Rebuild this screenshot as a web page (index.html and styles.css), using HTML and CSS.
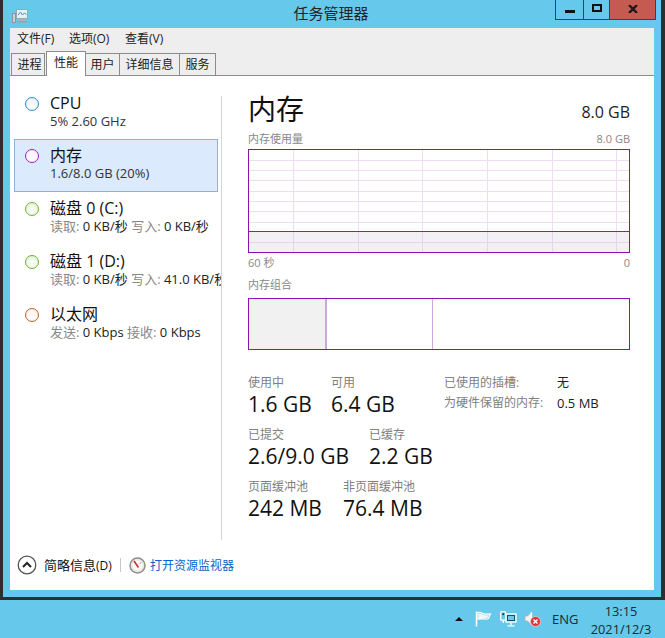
FILE: index.html
```html
<!DOCTYPE html>
<html lang="zh-CN">
<head>
<meta charset="utf-8">
<title>任务管理器</title>
<link rel="stylesheet" href="styles.css">
</head>
<body>
<div class="screen">
  <div class="window">
    <header class="titlebar">
      <div class="app-icon">
        <svg width="16" height="15" viewBox="0 0 16 15">
          <rect x="4.5" y="0.5" width="11" height="9" fill="#e4f3f9" stroke="#9aa8ae"/>
          <path d="M6 6l2.500-3 2 3 2-2 2 1.500" fill="none" stroke="#4a8fc4"/>
          <rect x="0.500" y="4.500" width="3" height="9" fill="#c9d2d6" stroke="#8a969b"/>
          <rect x="7" y="10" width="6" height="2" fill="#a9b4b9"/>
          <rect x="5" y="12" width="10" height="1.500" fill="#97a4a9"/>
        </svg>
      </div>
      <div class="title">任务管理器</div>
      <div class="controls">
        <div class="ctl ctl-min"><span class="min-glyph"></span></div>
        <div class="ctl ctl-max"><span class="max-glyph"></span></div>
        <div class="ctl ctl-close">
          <svg width="10" height="8" viewBox="0 0 10 8"><path d="M1 0l8 8M9 0l-8 8" fill="none" stroke="#1a1a1a" stroke-width="2.400"/></svg>
        </div>
      </div>
    </header>
    <div class="client">
      <nav class="menubar">
        <span class="menu">文件(F)</span>
        <span class="menu">选项(O)</span>
        <span class="menu">查看(V)</span>
      </nav>
      <div class="tabs">
        <span class="tab tab-1">进程</span>
        <span class="tab tab-active">性能</span>
        <span class="tab tab-3">用户</span>
        <span class="tab tab-4">详细信息</span>
        <span class="tab tab-5">服务</span>
      </div>
      <main class="panel">
        <aside class="sidebar">
          <div class="item item-first">
            <span class="dot dot-blue"></span>
            <div class="item-text"><div class="item-name">CPU</div><div class="item-sub dark">5% 2.60 GHz</div></div>
          </div>
          <div class="item item-selected">
            <span class="dot dot-purple"></span>
            <div class="item-text"><div class="item-name">内存</div><div class="item-sub dark">1.6/8.0 GB (20%)</div></div>
          </div>
          <div class="item">
            <span class="dot dot-green"></span>
            <div class="item-text"><div class="item-name">磁盘 0 (C:)</div><div class="item-sub"><i>读取:</i> 0 KB/秒 <i>写入:</i> 0 KB/秒</div></div>
          </div>
          <div class="item">
            <span class="dot dot-green"></span>
            <div class="item-text"><div class="item-name">磁盘 1 (D:)</div><div class="item-sub"><i>读取:</i> 0 KB/秒 <i>写入:</i> 41.0 KB/秒</div></div>
          </div>
          <div class="item">
            <span class="dot dot-orange"></span>
            <div class="item-text"><div class="item-name">以太网</div><div class="item-sub"><i>发送:</i> 0 Kbps <i>接收:</i> 0 Kbps</div></div>
          </div>
        </aside>
        <div class="divider"></div>
        <section class="detail">
          <div class="head-row">
            <h1 class="head">内存</h1>
            <span class="head-total">8.0 GB</span>
          </div>
          <div class="label-row label-usage">
            <span>内存使用量</span><span>8.0 GB</span>
          </div>
          <svg class="graph" width="382" height="104" viewBox="0 0 382 104" shape-rendering="crispEdges">
            <rect x="0" y="82" width="382" height="22" fill="#f3f0f5"/>
            <g stroke="#efdcf5" fill="none">
              <path d="M0 11.500H382M0 21.500H382M0 31.500H382M0 42.500H382M0 52.500H382M0 62.500H382M0 73.500H382"/>
              <path d="M45.500 0V82M110.500 0V82M174.500 0V82M239.500 0V82M304.500 0V82M368.500 0V82"/>
            </g>
            <g stroke="#e6d5ea" fill="none">
              <path d="M0 93.500H382"/>
              <path d="M45.500 82V104M110.500 82V104M174.500 82V104M239.500 82V104M304.500 82V104M368.500 82V104"/>
            </g>
            <path d="M0 82.500H382" stroke="#7b2a96"/>
            <rect x="0.500" y="0.500" width="381" height="103" fill="none" stroke="#8b12ae"/>
          </svg>
          <div class="label-row label-axis">
            <span>60 秒</span><span>0</span>
          </div>
          <div class="label-row label-combo"><span>内存组合</span></div>
          <div class="combo">
            <div class="seg seg-used"></div>
            <div class="seg seg-mod"></div>
            <div class="seg seg-free"></div>
          </div>
          <div class="stats">
            <div class="stats-main">
              <div class="stat-row">
                <div class="stat stat-a"><div class="stat-label">使用中</div><div class="stat-value">1.6 GB</div></div>
                <div class="stat"><div class="stat-label">可用</div><div class="stat-value">6.4 GB</div></div>
              </div>
              <div class="stat-row">
                <div class="stat stat-b"><div class="stat-label">已提交</div><div class="stat-value">2.6/9.0 GB</div></div>
                <div class="stat"><div class="stat-label">已缓存</div><div class="stat-value">2.2 GB</div></div>
              </div>
              <div class="stat-row">
                <div class="stat stat-c"><div class="stat-label">页面缓冲池</div><div class="stat-value">242 MB</div></div>
                <div class="stat"><div class="stat-label">非页面缓冲池</div><div class="stat-value">76.4 MB</div></div>
              </div>
            </div>
            <dl class="stats-side">
              <dt>已使用的插槽:</dt><dd>无</dd>
              <dt>为硬件保留的内存:</dt><dd class="side-num">0.5 MB</dd>
            </dl>
          </div>
        </section>
      </main>
      <footer class="footer">
        <span class="collapse">
          <svg width="20" height="20" viewBox="0 0 20 20"><circle cx="10" cy="10" r="8.800" fill="#fff" stroke="#555" stroke-width="1.300"/><path d="M6 12l4-4 4 4" fill="none" stroke="#222" stroke-width="2"/></svg>
        </span>
        <span class="fewer">简略信息<small>(D)</small></span>
        <span class="sep"></span>
        <span class="gauge">
          <svg width="17" height="17" viewBox="0 0 17 17"><circle cx="8.500" cy="8.500" r="7.500" fill="#ece9e4" stroke="#8f8f8f" stroke-width="1.500"/><circle cx="8.500" cy="8.500" r="5" fill="#fbfaf8"/><path d="M5 4l4.500 6.500" stroke="#c8322a" stroke-width="1.600"/><path d="M12 5l-1 2" stroke="#d6a27a"/></svg>
        </span>
        <a class="link">打开资源监视器</a>
      </footer>
    </div>
  </div>
  <div class="taskbar">
    <span class="tray-arrow"></span>
    <svg class="tray-flag" width="17" height="16" viewBox="0 0 17 16"><path d="M1.500 0.500v15" stroke="#fff" stroke-width="1.500"/><path d="M3 1.500c3-0.800 5 1.700 7 1.700l5.500-0.200c-1 1.500-1.500 3-2 4.500-3 1.700-6-0.500-10.500 0.500z" fill="#66c8ea" stroke="#fff" stroke-width="1.300"/><path d="M4 2.500c3-0.500 4 1.700 6.500 1.700l3.500 0c-1 1-1.500 2-1.500 2.800-3 1-5.500-0.500-8.500 0z" fill="#eef8fc"/></svg>
    <svg class="tray-net" width="17" height="16" viewBox="0 0 17 16"><rect x="0.700" y="0.700" width="5" height="8.500" rx="1" fill="none" stroke="#fff" stroke-width="1.300"/><rect x="2.300" y="2.300" width="1.800" height="1.800" fill="#234"/><path d="M3.200 9v3" stroke="#fff" stroke-width="1.300"/><rect x="6" y="3" width="10" height="8" fill="#66c8ea" stroke="#fff" stroke-width="1.300"/><rect x="7.500" y="4.500" width="7" height="5" fill="#66c8ea" stroke="#1f4f63"/><path d="M11 11.500v2.500M7.500 14.800h7" stroke="#fff" stroke-width="1.300"/></svg>
    <svg class="tray-sound" width="17" height="16" viewBox="0 0 17 16"><path d="M1 5h2.500l4-4v13l-4-4H1z" fill="#eef3f5" stroke="#9fb4bd" stroke-width="0.800"/><path d="M7.500 1v13" stroke="#fff" stroke-width="1.200"/><circle cx="11.500" cy="10.500" r="5" fill="#e2323a" stroke="#f3c9cc" stroke-width="0.800"/><path d="M9.500 8.500l4 4M13.500 8.500l-4 4" stroke="#fff" stroke-width="1.500"/></svg>
    <span class="lang">ENG</span>
    <div class="clock"><div>13:15</div><div>2021/12/3</div></div>
  </div>
</div>
</body>
</html>
```
FILE: styles.css
```css
* { box-sizing: border-box; }
html, body { margin: 0; padding: 0; }
body {
  font-family: "Open Sans", "Noto Sans CJK SC", sans-serif;
  color: #111;
  overflow: hidden;
}
.screen {
  width: 665px;
  height: 638px;
  display: flex;
  flex-direction: column;
  background: #66c8ea;
}
.window {
  height: 600px;
  flex: none;
  background: #66c8ea;
  border-left: 3px solid #2e2e30;
  border-right: 4px solid #2e2e30;
  border-bottom: 3px solid #2e2e30;
  padding: 0 7px 7px;
  display: flex;
  flex-direction: column;
}

/* title bar */
.titlebar {
  height: 28px;
  flex: none;
  display: grid;
  grid-template-columns: 1fr auto 1fr;
  margin-right: -2px;
}
.app-icon { padding: 7px 0 0 2px; }
.title {
  font-size: 15px;
  line-height: 26px;
  color: #222;
  padding-right: 4px;
}
.controls { display: flex; justify-content: flex-end; align-items: flex-start; }
.ctl {
  height: 20px;
  border: 1px solid #1e4d62;
  border-top: 0;
  border-right: 0;
  display: flex;
  align-items: center;
  justify-content: center;
}
.ctl-min { width: 28px; }
.ctl-max { width: 26px; }
.ctl-close { width: 47px; background: #c55a50; border-right: 1px solid #1e4d62; }
.min-glyph { width: 10px; height: 3px; background: #111; margin-top: 4px; }
.max-glyph { width: 10px; height: 8px; border: 2px solid #111; margin-top: -3px; }
.ctl-close svg { margin-top: -2px; }

/* client */
.client {
  flex: 1;
  min-height: 0;
  background: #fff;
  display: flex;
  flex-direction: column;
}
.menubar {
  height: 21px;
  flex: none;
  background: #eeeeee;
  display: flex;
  padding-left: 7px;
  font-size: 12px;
  line-height: 22px;
  color: #222;
}
.menu:nth-child(1) { width: 52px; }
.menu:nth-child(2) { width: 56px; }

/* tabs */
.tabs {
  height: 27px;
  flex: none;
  background: #eeeeee;
  display: flex;
  align-items: flex-end;
  padding-left: 1px;
  border-bottom: 1px solid #8c8c8c;
  font-size: 12px;
  color: #222;
}
.tab {
  height: 22px;
  background: #eeeeee;
  border: 1px solid #8c8c8c;
  border-bottom: 0;
  text-align: center;
  line-height: 22px;
  margin-left: -1px;
}
.tab-1 { width: 34px; margin-left: 0; margin-right: 1px; padding-left: 3px; }
.tab-active {
  width: 40px;
  height: 25px;
  margin: 0 0 -1px 0;
  background: #fff;
  line-height: 22px;
  position: relative;
  z-index: 1;
}
.tab-3 { width: 35px; }
.tab-4 { width: 61px; }
.tab-5 { width: 37px; }

/* panel */
.panel {
  flex: 1;
  min-height: 0;
  display: flex;
}
.sidebar {
  width: 211px;
  flex: none;
  padding: 20px 0 0 4px;
  overflow: hidden;
}
.divider {
  width: 1px;
  flex: none;
  margin-top: 20px;
  background: #d4d4d4;
}
.item {
  height: 53px;
  display: flex;
  align-items: flex-start;
  padding: 10px 0 0 11px;
  width: 204px;
  white-space: nowrap;
}
.item-first { height: 43px; padding-top: 1px; }
.item-selected {
  background: #dbeafc;
  box-shadow: inset 0 0 0 1px #8fb1e0;
}
.dot {
  width: 14px;
  height: 14px;
  border-radius: 50%;
  border: 1.500px solid;
  flex: none;
}
.dot-blue { border-color: #2a8fc8; background: radial-gradient(circle at 50% 60%, #fff, #dfecf5); }
.dot-purple { border-color: #9a2bb8; background: radial-gradient(circle at 50% 60%, #fff, #f4e6f8); }
.dot-green { border-color: #6db32c; background: radial-gradient(circle at 50% 60%, #fff, #dff1d0); }
.dot-orange { border-color: #b8692c; background: radial-gradient(circle at 50% 60%, #fff, #fbeade); }
.item-text { margin-left: 11px; margin-top: -4px; }
.item-name { font-size: 16px; line-height: 20px; color: #111; }
.item-sub { font-size: 13px; line-height: 16px; color: #222; }
.item-sub i { font-style: normal; color: #888; }
.item-sub.dark { color: #333; }

/* detail */
.detail {
  flex: 1;
  min-width: 0;
  padding: 17px 24px 0 26px;
}
.head-row {
  display: flex;
  justify-content: space-between;
  align-items: flex-end;
  height: 32px;
}
.head {
  margin: 0;
  font-weight: 400;
  font-size: 28px;
  line-height: 32px;
  color: #111;
}
.head-total { font-size: 16px; line-height: 22px; margin-bottom: 2px; color: #222; }
.label-row {
  display: flex;
  justify-content: space-between;
  font-size: 11px;
  line-height: 14px;
  color: #888;
}
.label-usage { margin-top: 7px; height: 17px; }
.graph { display: block; }
.label-axis { margin-top: 3px; }
.label-combo { margin-top: 8px; }
.combo {
  margin-top: 6px;
  height: 52px;
  border: 1px solid #8b12ae;
  display: flex;
}
.seg-used { width: 78px; background: #f1f1f1; border-right: 2px solid #c9a8d8; }
.seg-mod { width: 106px; border-right: 1px solid #d0a8e0; }
.seg-free { flex: 1; }

/* stats */
.stats {
  display: flex;
  margin-top: 25px;
}
.stats-main { width: 196px; flex: none; }
.stat-row { display: flex; height: 52px; white-space: nowrap; }
.stat-a { width: 83px; }
.stat-b { width: 121px; }
.stat-c { width: 95px; }
.stat-label { font-size: 12px; line-height: 16px; color: #808080; }
.stat-value { font-size: 21px; line-height: 26px; color: #111; }
.stats-side {
  margin: 0;
  display: grid;
  grid-template-columns: 113px auto;
  grid-auto-rows: 20px;
  font-size: 12px;
  line-height: 16px;
  white-space: nowrap;
}
.stats-side dt { color: #808080; }
.stats-side dd { margin: 0; color: #222; }
.stats-side .side-num { font-size: 13px; }

/* footer */
.footer {
  height: 50px;
  flex: none;
  display: flex;
  align-items: center;
  padding: 0 0 0 7px;
}
.collapse { display: flex; width: 27px; }
.fewer { font-size: 13px; width: 76px; color: #111; white-space: nowrap; padding-bottom: 2px; }
.fewer small { font-size: 12px; }
.sep { width: 1px; height: 14px; background: #c8c8c8; }
.gauge { display: flex; margin-left: 8px; }
.link { margin-left: 4px; font-size: 12px; color: #0a62c8; }

/* taskbar */
.taskbar {
  flex: 1;
  display: flex;
  align-items: center;
  padding-left: 455px;
}
.tray-arrow {
  width: 0;
  height: 0;
  border-left: 4px solid transparent;
  border-right: 4px solid transparent;
  border-bottom: 4px solid #111;
}
.tray-flag { margin-left: 12px; }
.tray-net { margin-left: 8px; }
.tray-sound { margin-left: 7px; }
.lang { margin-left: 11px; font-size: 13px; color: #1a2a30; width: 30px; }
.clock {
  width: 78px;
  font-size: 12.800px;
  line-height: 18px;
  padding-top: 2px;
  text-align: center;
  color: #1a2a30;
}
```
